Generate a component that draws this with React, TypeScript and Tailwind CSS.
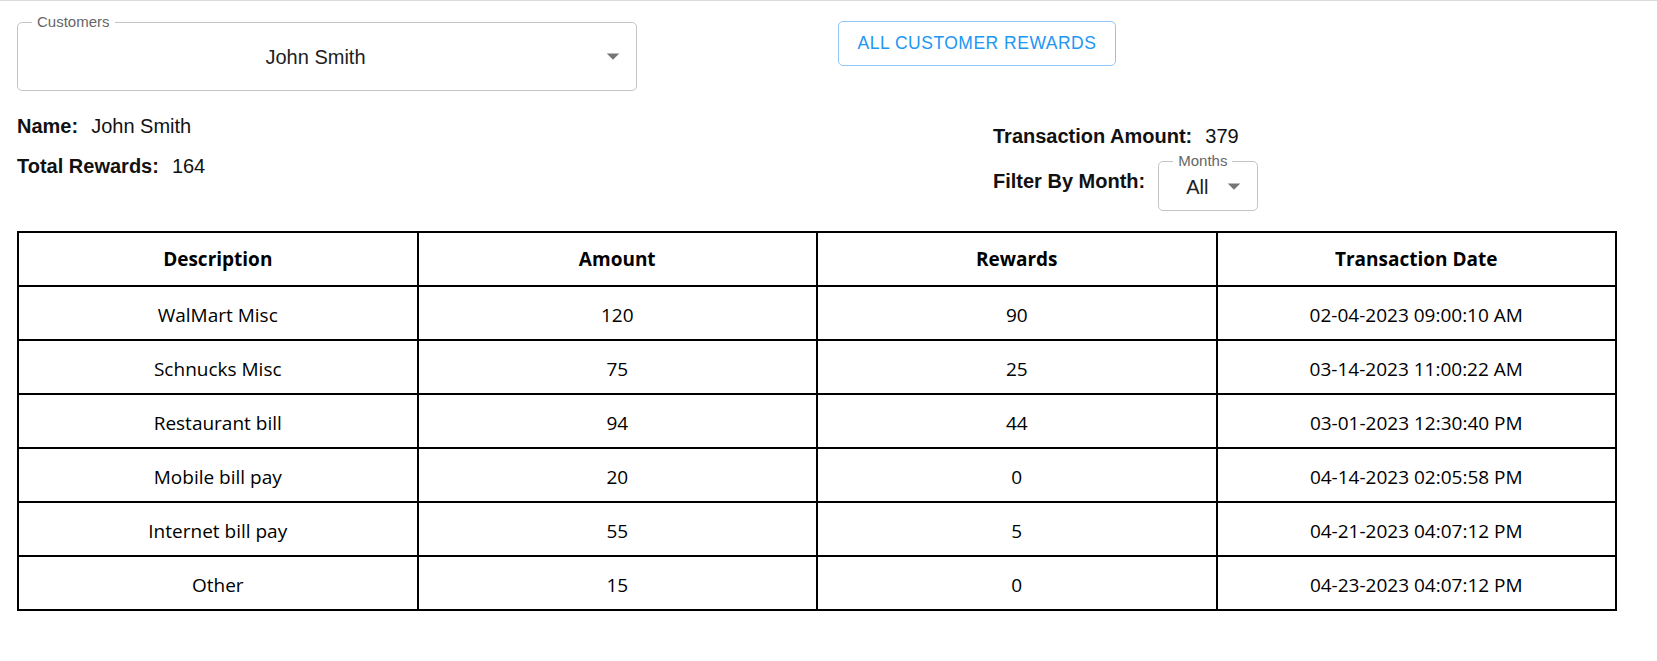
import React from "react";

const rows = [
  ["WalMart Misc", "120", "90", "02-04-2023 09:00:10 AM"],
  ["Schnucks Misc", "75", "25", "03-14-2023 11:00:22 AM"],
  ["Restaurant bill", "94", "44", "03-01-2023 12:30:40 PM"],
  ["Mobile bill pay", "20", "0", "04-14-2023 02:05:58 PM"],
  ["Internet bill pay", "55", "5", "04-21-2023 04:07:12 PM"],
  ["Other", "15", "0", "04-23-2023 04:07:12 PM"],
];

function Caret() {
  return (
    <svg width="30" height="30" viewBox="0 0 24 24" className="shrink-0">
      <path d="M7 10l5 5 5-5z" fill="rgba(0,0,0,0.54)" />
    </svg>
  );
}

export default function App() {
  const sans = { fontFamily: '"Liberation Sans", Arial, sans-serif' };
  return (
    <div className="min-h-[661px] bg-white" style={sans}>
      <div className="h-px bg-[#dcdcdc]" />
      <div className="pl-[17px]">
        {/* Top row */}
        <div className="flex items-start mt-[20px]">
          <div className="relative mt-px w-[620px] h-[69px] rounded-[5px] border border-[#c4c4c4] flex items-center">
            <span className="absolute left-[14px] -top-[10px] bg-white px-[5px] text-[15px] leading-[18px] text-[#666666]">
              Customers
            </span>
            <div className="flex-1 pl-[17px] pr-[40px] text-center text-[20px] leading-[24px] text-[#212121]">
              John Smith
            </div>
            <div className="absolute right-[8px] top-[18px]">
              <Caret />
            </div>
          </div>
          <button className="ml-[201px] w-[278px] h-[45px] rounded-[5px] border border-[#90c6f8] text-[#2196f3] text-[17.5px] tracking-[0.5px] uppercase flex items-center justify-center">
            All Customer Rewards
          </button>
        </div>

        {/* Info row */}
        <div className="flex">
          <div className="w-[976px] pt-[21px] text-[20px] leading-[28px] text-[#111]">
            <div>
              <span className="font-bold mr-[13px]">Name:</span>
              <span>John Smith</span>
            </div>
            <div className="mt-[12px]">
              <span className="font-bold mr-[13px]">Total Rewards:</span>
              <span>164</span>
            </div>
          </div>
          <div className="pt-[31px] text-[20px] leading-[28px] text-[#111]">
            <div>
              <span className="font-bold mr-[13px]">Transaction Amount:</span>
              <span>379</span>
            </div>
            <div className="flex items-start mt-[11px]">
              <span className="font-bold mt-[6px]">Filter By Month:</span>
              <div className="relative ml-[13px] w-[100px] h-[50px] rounded-[5px] border border-[#c4c4c4] flex items-center">
                <span className="absolute left-[14px] -top-[10px] bg-white px-[5px] text-[15px] leading-[18px] text-[#666666]">
                  Months
                </span>
                <span className="pl-[27px] mt-[1px] text-[20px] leading-[24px] text-[#212121]">All</span>
                <div className="absolute right-[8px] top-[9px]">
                  <Caret />
                </div>
              </div>
            </div>
          </div>
        </div>

        {/* Table */}
        <table
          className="mt-[20px] w-[1600px] table-fixed border-collapse border-2 border-black text-black text-center"
          style={{ fontFamily: '"Open Sans", "Noto Sans", sans-serif' }}
        >
          <thead>
            <tr className="h-[54px]">
              {["Description", "Amount", "Rewards", "Transaction Date"].map((h) => (
                <th key={h} className="border-2 border-black text-[19px] font-bold p-0">
                  {h}
                </th>
              ))}
            </tr>
          </thead>
          <tbody>
            {rows.map((r, i) => (
              <tr key={i} className="h-[54px]">
                {r.map((c, j) => (
                  <td key={j} className="border-2 border-black text-[19px] p-0 pt-[4px]">
                    {c}
                  </td>
                ))}
              </tr>
            ))}
          </tbody>
        </table>
      </div>
    </div>
  );
}
